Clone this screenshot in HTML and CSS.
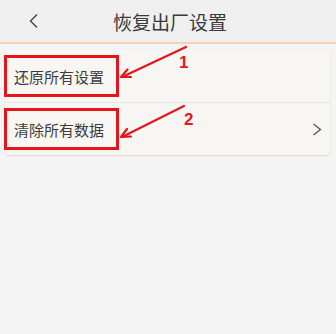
FILE: index.html
```html
<!DOCTYPE html>
<html lang="zh-CN">
<head>
    <meta charset="UTF-8">
    <meta name="viewport" content="width=device-width, initial-scale=1.0">
    <title>恢复出厂设置</title>
    <link rel="stylesheet" href="styles.css">
</head>
<body>
    <div class="page">
        <header class="topbar">
            <span class="back">
                <svg width="12" height="16" viewBox="0 0 12 16">
                    <polyline points="9,1.5 2.5,8 9,14.5" fill="none" stroke="#444" stroke-width="1.4"/>
                </svg>
            </span>
            <h1 class="title">恢复出厂设置</h1>
            <span></span>
        </header>

        <div class="content">
            <div class="card">
                <div class="row">
                    <span class="mark">还原所有设置</span>
                </div>
                <div class="row">
                    <span class="mark">清除所有数据</span>
                    <span class="chevron">
                        <svg width="10" height="13" viewBox="0 0 10 13">
                            <polyline points="1.5,1 8.5,6.5 1.5,12" fill="none" stroke="#555" stroke-width="1.3"/>
                        </svg>
                    </span>
                </div>
            </div>
        </div>

        <!-- annotation arrows -->
        <svg class="notes" width="336" height="334" viewBox="0 0 336 334">
            <g stroke="#e3151d" stroke-width="2.2" fill="none" stroke-linecap="round" stroke-linejoin="round">
                <line x1="186" y1="47" x2="122" y2="77"/>
                <polyline points="131,77 121,77 127.5,69.5"/>
                <line x1="184" y1="106" x2="122" y2="137"/>
                <polyline points="131,136.5 121,137 127,129"/>
            </g>
            <g fill="#e3151d" font-family="Liberation Sans, Arial, sans-serif" font-weight="bold" font-size="17">
                <text x="179" y="68">1</text>
                <text x="184" y="125">2</text>
            </g>
        </svg>
    </div>
</body>
</html>
```

FILE: styles.css
```css
body {
    margin: 0;
    font-family: "Noto Sans CJK SC", "Noto Sans", sans-serif;
    background: #f5f4f4;
    color: #333333;
}

.page {
    position: relative;
    width: 336px;
    height: 334px;
    overflow: hidden;
}

.topbar {
    display: grid;
    grid-template-columns: 60px 1fr 60px;
    align-items: center;
    height: 42px;
    background: #efefef;
    border-bottom: 2px solid #f6d2b4;
}

.back {
    display: flex;
    padding-left: 28px;
}

.title {
    margin: 0;
    text-align: center;
    font-size: 19px;
    font-weight: normal;
    color: #3a3a3a;
    padding-left: 4px;
}

.content {
    padding: 6px 6px 0 5px;
}

.card {
    background: #f7f6f3;
    border-radius: 4px;
    box-shadow: 0 1px 2px rgba(0, 0, 0, 0.12);
}

.row {
    display: flex;
    align-items: center;
    justify-content: space-between;
    height: 52px;
}

.row + .row {
    border-top: 1px solid #e6e4e0;
}

.mark {
    display: flex;
    align-items: center;
    box-sizing: border-box;
    width: 115px;
    height: 42px;
    margin-left: -1px;
    padding-left: 7px;
    border: 3px solid #e3151d;
    font-size: 15px;
    color: #3c3c3c;
}

.chevron {
    display: flex;
    padding-right: 8px;
}

.notes {
    position: absolute;
    top: 0;
    left: 0;
    pointer-events: none;
}
```
